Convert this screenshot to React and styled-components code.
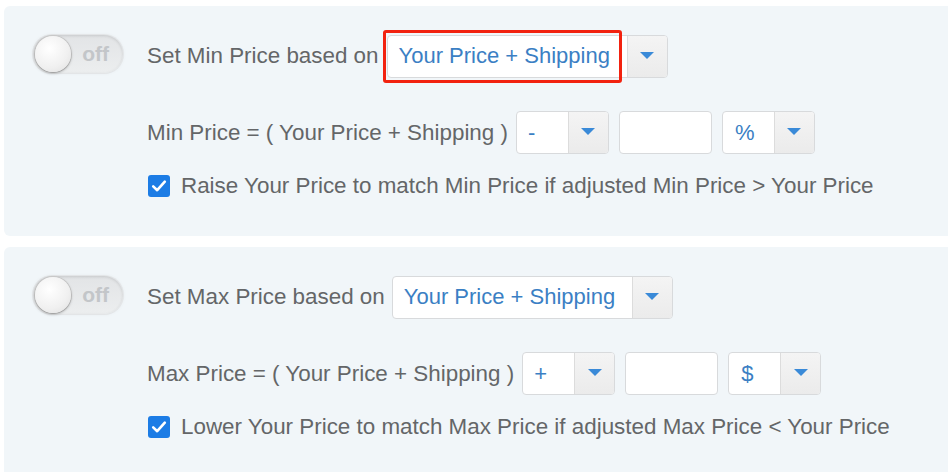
import React from "react";
import styled, { createGlobalStyle } from "styled-components";

const Global = createGlobalStyle`
  html, body { margin: 0; padding: 0; background: #ffffff; }
  body { font-family: "Liberation Sans", Arial, sans-serif; overflow: hidden; }
  #root { width: 948px; height: 472px; }
`;

const Page = styled.div`
  display: flex;
  flex-direction: column;
  gap: 11px;
  padding: 6px 0 0 4px;
`;

const Panel = styled.section`
  background: #f1f6f9;
  border-radius: 6px;
  width: 960px;
  height: 230px;
  box-sizing: border-box;
  padding: 28px 0 0 29px;
  display: grid;
  grid-template-columns: 90px 1fr;
  column-gap: 24px;
  align-content: start;
`;

const ToggleCell = styled.div`
  padding-top: 1px;
`;

const Toggle = styled.div`
  position: relative;
  width: 90px;
  height: 38px;
  border-radius: 19px;
  background: linear-gradient(#e2e4e6, #eceeef);
  box-shadow: inset 0 1px 3px rgba(0,0,0,0.12), 0 0 0 1px #e3e5e7, 0 0 4px rgba(0,0,0,0.06);
  display: flex;
  align-items: center;
  justify-content: flex-end;
  padding-right: 14px;
  box-sizing: border-box;
  font-weight: bold;
  font-size: 21px;
  color: #c3c6c9;
`;

const Knob = styled.span`
  position: absolute;
  left: 2px;
  top: 1px;
  width: 36px;
  height: 36px;
  border-radius: 50%;
  background: radial-gradient(circle at 40% 35%, #ffffff, #f0f0f0 60%, #dedede);
  box-shadow: 0 1px 3px rgba(0,0,0,0.35), 0 0 0 1px #d2d2d2;
`;

const Content = styled.div`
  display: flex;
  flex-direction: column;
  padding-top: 3px;
`;

const Row = styled.div`
  display: flex;
  align-items: center;
  height: ${p => p.h}px;
  margin-top: ${p => p.mt || 0}px;
`;

const Label = styled.span`
  font-size: 22.4px;
  color: #646668;
  white-space: nowrap;
  margin-right: ${p => p.mr || 8}px;
`;

const SelectBox = styled.div`
  position: relative;
  display: flex;
  width: ${p => p.w}px;
  height: ${p => p.h}px;
  border: 1px solid #d8dadc;
  border-radius: 4px;
  background: #ffffff;
  box-sizing: border-box;
  margin-right: ${p => p.mr || 0}px;
`;

const SelectValue = styled.div`
  flex: 1;
  display: flex;
  align-items: center;
  padding-left: ${p => p.pl || 11}px;
  font-size: ${p => p.fs || 22}px;
  color: #3b7fc4;
  white-space: nowrap;
`;

const ArrowPart = styled.div`
  width: 39px;
  display: flex;
  align-items: center;
  justify-content: center;
  background: linear-gradient(#f4f4f4, #ebebeb);
  border-left: 1px solid #dcdcdc;
  border-radius: 0 3px 3px 0;
`;

const Triangle = styled.span`
  width: 0;
  height: 0;
  border-left: 7px solid transparent;
  border-right: 7px solid transparent;
  border-top: 7px solid #3a8ad8;
  margin-bottom: 2px;
`;

const Highlight = styled.div`
  position: absolute;
  left: -5px;
  top: -6px;
  width: 239px;
  height: 53px;
  border: 3.5px solid #f2220f;
  border-radius: 3px;
  box-sizing: border-box;
  pointer-events: none;
`;

const InputBox = styled.div`
  width: 93px;
  height: 43px;
  border: 1px solid #d8dadc;
  border-radius: 4px;
  background: #ffffff;
  box-sizing: border-box;
  margin-right: 10px;
`;

const Check = styled.span`
  width: 22px;
  height: 22px;
  border-radius: 3px;
  background: #1c7ce5;
  display: inline-flex;
  align-items: center;
  justify-content: center;
  margin: 0 11px 0 1px;
  flex: none;
`;

const Select = ({ w, h = 43, value, mr, fs, pl, highlight }) => (
  <SelectBox w={w} h={h} mr={mr}>
    <SelectValue fs={fs} pl={pl}>{value}</SelectValue>
    <ArrowPart><Triangle /></ArrowPart>
    {highlight && <Highlight />}
  </SelectBox>
);

const CheckMark = () => (
  <Check>
    <svg width="16" height="14" viewBox="0 0 16 14">
      <path d="M2.2 7.4 L6.2 11.2 L13.8 2.6" fill="none" stroke="#fff" strokeWidth="2.6" strokeLinecap="round" strokeLinejoin="round" />
    </svg>
  </Check>
);

const Section = ({ kind, op, unit, highlight, checkText, selX }) => (
  <Panel>
    <ToggleCell>
      <Toggle>off<Knob /></Toggle>
    </ToggleCell>
    <Content>
      <Row h={44} mt={-3}>
        <Label mr={selX}>Set {kind} Price based on</Label>
        <Select w={281} value="Your Price + Shipping" highlight={highlight} />
      </Row>
      <Row h={43} mt={33}>
        <Label>{kind} Price = ( Your Price + Shipping )</Label>
        <Select w={93} value={op} mr={10} />
        <InputBox />
        <Select w={93} value={unit} pl={12} />
      </Row>
      <Row h={24} mt={20}>
        <CheckMark />
        <Label>{checkText}</Label>
      </Row>
    </Content>
  </Panel>
);

export default function App() {
  return (
    <>
      <Global />
      <Page>
        <Section
          kind="Min"
          op="-"
          unit="%"
          highlight
          selX={8}
          checkText="Raise Your Price to match Min Price if adjusted Min Price > Your Price"
        />
        <Section
          kind="Max"
          op="+"
          unit="$"
          selX={7}
          checkText="Lower Your Price to match Max Price if adjusted Max Price < Your Price"
        />
      </Page>
    </>
  );
}
